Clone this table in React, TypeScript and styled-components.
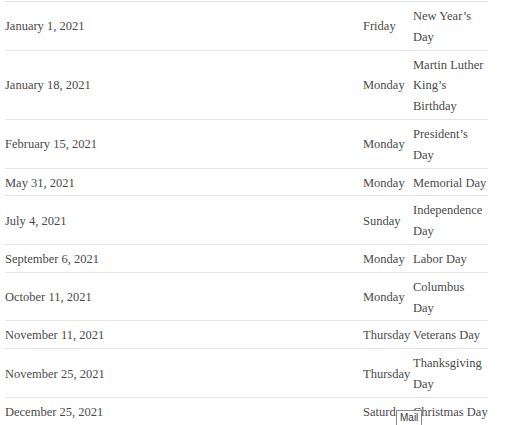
import React from "react";
import styled, { createGlobalStyle } from "styled-components";

const Global = createGlobalStyle`
  html, body { margin: 0; padding: 0; background: #ffffff; }
  body { width: 512px; height: 425px; overflow: hidden; position: relative; }
`;

const Page = styled.div`
  padding: 1px 0 0 5px;
  font-family: "Liberation Serif", "DejaVu Serif", serif;
  font-size: 12.5px;
  color: #4a4a4a;
`;

const Table = styled.table`
  border-collapse: collapse;
  table-layout: fixed;
  width: 483px;
  border-top: 1px solid #e4e4e4;
`;

const Row = styled.tr`
  border-bottom: 1px solid #e4e4e4;
`;

const Cell = styled.td`
  padding: 4px 0 2px 0;
  line-height: 20.8px;
  vertical-align: middle;
  text-align: left;
  overflow: visible;
  white-space: normal;
`;

const Tooltip = styled.div`
  position: absolute;
  left: 396px;
  top: 410px;
  padding: 1px 3px;
  background: #ffffff;
  border: 1px solid #8a8a8a;
  font-family: "Liberation Sans", Arial, sans-serif;
  font-size: 10px;
  line-height: 12px;
  color: #333;
`;

const rows: [string, string, string][] = [
  ["January 1, 2021", "Friday", "New Year’s Day"],
  ["January 18, 2021", "Monday", "Martin Luther King’s Birthday"],
  ["February 15, 2021", "Monday", "President’s Day"],
  ["May 31, 2021", "Monday", "Memorial Day"],
  ["July 4, 2021", "Sunday", "Independence Day"],
  ["September 6, 2021", "Monday", "Labor Day"],
  ["October 11, 2021", "Monday", "Columbus Day"],
  ["November 11, 2021", "Thursday", "Veterans Day"],
  ["November 25, 2021", "Thursday", "Thanksgiving Day"],
  ["December 25, 2021", "Saturday", "Christmas Day"],
];

export default function App() {
  return (
    <>
      <Global />
      <Page>
        <Table>
          <colgroup>
            <col style={{ width: 358 }} />
            <col style={{ width: 50 }} />
            <col style={{ width: 75 }} />
          </colgroup>
          <tbody>
            {rows.map(([d, w, h]) => (
              <Row key={d}>
                <Cell>{d}</Cell>
                <Cell>{w}</Cell>
                <Cell>{h}</Cell>
              </Row>
            ))}
          </tbody>
        </Table>
      </Page>
      <Tooltip>Mail</Tooltip>
    </>
  );
}
